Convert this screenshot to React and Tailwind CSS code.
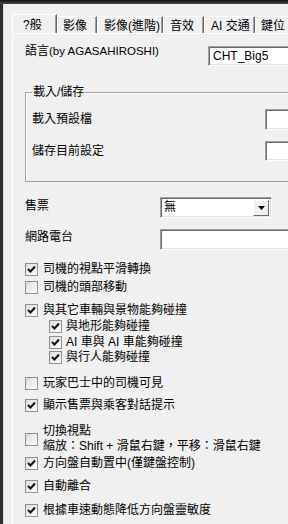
import { useState } from "react";

const font = "font-['Liberation_Sans','Noto_Sans_CJK_TC',sans-serif]";
const sunken =
  "bg-white border border-t-[#a0a0a0] border-l-[#a0a0a0] border-b-white border-r-white shadow-[inset_1px_1px_0_#696969,inset_-1px_-1px_0_#e3e3e3]";

const tabs = [
  { label: "?般", w: "w-[45px]", pl: "pl-[10px]" },
  { label: "影像", w: "w-[40px]", pl: "pl-[5px]" },
  { label: "影像(進階)", w: "w-[66px]", pl: "pl-[6px]" },
  { label: "音效", w: "w-[41px]", pl: "pl-[6px]" },
  { label: "AI 交通", w: "w-[51px]", pl: "pl-[6px]" },
  { label: "鍵位", w: "w-[45px]", pl: "pl-[5px]" },
];

const Check = ({ checked, onClick }) => (
  <button
    type="button"
    onClick={onClick}
    className="w-[13px] h-[13px] shrink-0 border border-[#8e8f8f] bg-gradient-to-br from-[#dcdcdc] to-white flex items-center justify-center p-0"
  >
    {checked && (
      <svg width="9" height="9" viewBox="0 0 9 9">
        <polyline points="1,4 3.5,6.5 8,1.5" fill="none" stroke="#111" strokeWidth="2" />
      </svg>
    )}
  </button>
);

const CheckRow = ({ id, label, state, toggle, className = "", sub = false }) => (
  <div className={`flex items-center ${sub ? "pl-[24px] gap-[4px]" : "gap-[5px]"} ${className}`}>
    <Check checked={state[id]} onClick={() => toggle(id)} />
    <span className="text-[12px] leading-[13px] text-black whitespace-nowrap">{label}</span>
  </div>
);

const App = () => {
  const [active, setActive] = useState(0);
  const [state, setState] = useState({
    smooth: true,
    head: false,
    collide: true,
    terrain: true,
    ai: true,
    ped: true,
    driver: false,
    ticket: true,
    view: false,
    center: true,
    clutch: true,
    steer: true,
  });
  const toggle = (id) => setState({ ...state, [id]: !state[id] });

  return (
    <div className={`w-[288px] h-[524px] overflow-hidden bg-[#f0f0f0] ${font}`}>
      <div className="h-[4px] bg-gradient-to-b from-[#141414] to-[#4a4a4a]" />
      <div className="flex h-[520px]">
        <div className="w-[3px] bg-[#2e2e2e]" />
        <div className="w-[1px] bg-[#dcdcdc]" />
        <div className="flex-1 pl-[8px] flex flex-col min-w-0 overflow-hidden">
          {/* tabs */}
          <div className="mt-[10px] h-[19px] flex items-end">
            {tabs.map((t, i) => (
              <button
                key={t.label}
                type="button"
                onClick={() => setActive(i)}
                className={`${t.w} ${t.pl} shrink-0 whitespace-nowrap bg-[#f0f0f0] border-t border-l border-t-white border-l-white border-r border-r-[#696969] shadow-[inset_-1px_0_0_#a0a0a0] text-[12px] leading-[14px] text-black text-left pt-[2px] ${
                  active === i ? "h-[19px]" : "h-[17px]"
                }`}
              >
                {t.label}
              </button>
            ))}
          </div>
          {/* panel */}
          <div className="flex-1 border-t border-l border-white pl-[12px] flex flex-col">
            <div className="mt-[12px] h-[20px] flex">
              <span className="w-[183px] shrink-0 -mt-[2px] text-[11.5px] leading-[14px] whitespace-nowrap">
                <span className="text-[12px]">語言</span>(by AGASAHIROSHI)
              </span>
              <div className={`w-[100px] h-[20px] shrink-0 ${sunken} text-[12px] leading-[18px] pl-[4px]`}>
                CHT_Big5
              </div>
            </div>

            {/* group box */}
            <div className="relative mt-[26px] h-[90px] border border-[#a0a0a0] border-r-0 shadow-[inset_1px_1px_0_#fff] flex flex-col pl-[6px]">
              <span className="absolute -top-[7px] left-[6px] px-[1px] bg-[#f0f0f0] text-[12px] leading-[13px]">
                載入/儲存
              </span>
              <div className="mt-[16px] h-[21px] flex items-center">
                <span className="w-[233px] shrink-0 text-[12px] leading-[13px]">載入預設檔</span>
                <div className={`w-[40px] h-[21px] shrink-0 ${sunken}`} />
              </div>
              <div className="mt-[11px] h-[20px] flex items-center">
                <span className="w-[233px] shrink-0 text-[12px] leading-[13px]">儲存目前設定</span>
                <div className={`w-[40px] h-[20px] shrink-0 ${sunken}`} />
              </div>
            </div>

            <div className="mt-[15px] h-[21px] flex items-center">
              <span className="w-[135px] shrink-0 text-[12px] leading-[13px] -mt-[3px]">售票</span>
              <div className={`w-[112px] h-[21px] shrink-0 ${sunken} flex items-center justify-between pl-[3px] pr-[2px]`}>
                <span className="text-[12px] leading-[13px]">無</span>
                <div className="w-[16px] h-[16px] bg-[#f0f0f0] border border-t-white border-l-white border-b-[#696969] border-r-[#696969] flex items-center justify-center">
                  <svg width="7" height="4" viewBox="0 0 7 4">
                    <polygon points="0,0 7,0 3.5,4" fill="#000" />
                  </svg>
                </div>
              </div>
            </div>

            <div className="mt-[11px] h-[21px] flex items-center">
              <span className="w-[135px] shrink-0 text-[12px] leading-[13px] -mt-[5px]">網路電台</span>
              <div className={`w-[140px] h-[21px] shrink-0 ${sunken}`} />
            </div>

            <div className="flex flex-col">
              <CheckRow id="smooth" label="司機的視點平滑轉換" state={state} toggle={toggle} className="mt-[13px]" />
              <CheckRow id="head" label="司機的頭部移動" state={state} toggle={toggle} className="mt-[5px]" />
              <CheckRow id="collide" label="與其它車輛與景物能夠碰撞" state={state} toggle={toggle} className="mt-[10px]" />
              <CheckRow id="terrain" label="與地形能夠碰撞" state={state} toggle={toggle} sub className="mt-[3px]" />
              <CheckRow id="ai" label="AI 車與 AI 車能夠碰撞" state={state} toggle={toggle} sub className="mt-[3px]" />
              <CheckRow id="ped" label="與行人能夠碰撞" state={state} toggle={toggle} sub className="mt-[2px]" />
              <CheckRow id="driver" label="玩家巴士中的司機可見" state={state} toggle={toggle} className="mt-[13px]" />
              <CheckRow id="ticket" label="顯示售票與乘客對話提示" state={state} toggle={toggle} className="mt-[9px]" />
              <div className="mt-[12px] flex items-center gap-[5px]">
                <Check checked={state.view} onClick={() => toggle("view")} />
                <span className="text-[12px] leading-[15px] whitespace-nowrap">
                  切換視點
                  <br />
                  縮放：Shift + 滑鼠右鍵，平移：滑鼠右鍵
                </span>
              </div>
              <CheckRow id="center" label="方向盤自動置中(僅鍵盤控制)" state={state} toggle={toggle} className="mt-[3px]" />
              <CheckRow id="clutch" label="自動離合" state={state} toggle={toggle} className="mt-[10px]" />
              <CheckRow id="steer" label="根據車速動態降低方向盤靈敏度" state={state} toggle={toggle} className="mt-[11px]" />
            </div>
          </div>
        </div>
      </div>
    </div>
  );
};

export default App;
